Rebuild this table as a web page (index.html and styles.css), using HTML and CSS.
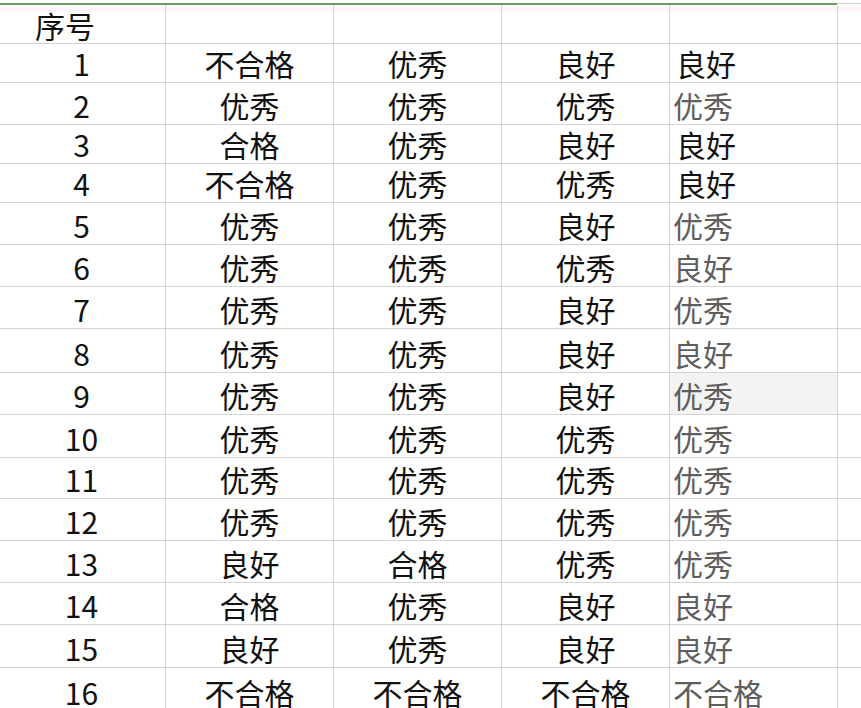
FILE: index.html
```html
<!DOCTYPE html>
<html lang="zh">
<head>
<meta charset="utf-8">
<title>sheet</title>
<link rel="stylesheet" href="styles.css">
</head>
<body>
<div class="sheet">
  <div class="topbar"><div class="topline"></div><div class="topend"></div></div>
  <div class="row h39 head"><div class="c c0 hd">序号</div><div class="c"></div><div class="c"></div><div class="c"></div><div class="c c4"></div><div class="c c5"></div></div>
  <div class="row h39"><div class="c c0">1</div><div class="c">不合格</div><div class="c">优秀</div><div class="c">良好</div><div class="c c4 dk">良好</div><div class="c c5"></div></div>
  <div class="row h42"><div class="c c0">2</div><div class="c">优秀</div><div class="c">优秀</div><div class="c">优秀</div><div class="c c4">优秀</div><div class="c c5"></div></div>
  <div class="row h39"><div class="c c0">3</div><div class="c">合格</div><div class="c">优秀</div><div class="c">良好</div><div class="c c4 dk">良好</div><div class="c c5"></div></div>
  <div class="row h39"><div class="c c0">4</div><div class="c">不合格</div><div class="c">优秀</div><div class="c">优秀</div><div class="c c4 dk">良好</div><div class="c c5"></div></div>
  <div class="row h42"><div class="c c0">5</div><div class="c">优秀</div><div class="c">优秀</div><div class="c">良好</div><div class="c c4">优秀</div><div class="c c5"></div></div>
  <div class="row h42"><div class="c c0">6</div><div class="c">优秀</div><div class="c">优秀</div><div class="c">优秀</div><div class="c c4">良好</div><div class="c c5"></div></div>
  <div class="row h42"><div class="c c0">7</div><div class="c">优秀</div><div class="c">优秀</div><div class="c">良好</div><div class="c c4">优秀</div><div class="c c5"></div></div>
  <div class="row h44"><div class="c c0">8</div><div class="c">优秀</div><div class="c">优秀</div><div class="c">良好</div><div class="c c4">良好</div><div class="c c5"></div></div>
  <div class="row h42"><div class="c c0">9</div><div class="c">优秀</div><div class="c">优秀</div><div class="c">良好</div><div class="c c4 sel">优秀</div><div class="c c5"></div></div>
  <div class="row h43"><div class="c c0">10</div><div class="c">优秀</div><div class="c">优秀</div><div class="c">优秀</div><div class="c c4">优秀</div><div class="c c5"></div></div>
  <div class="row h41"><div class="c c0">11</div><div class="c">优秀</div><div class="c">优秀</div><div class="c">优秀</div><div class="c c4">优秀</div><div class="c c5"></div></div>
  <div class="row h42"><div class="c c0">12</div><div class="c">优秀</div><div class="c">优秀</div><div class="c">优秀</div><div class="c c4">优秀</div><div class="c c5"></div></div>
  <div class="row h42"><div class="c c0">13</div><div class="c">良好</div><div class="c">合格</div><div class="c">优秀</div><div class="c c4">优秀</div><div class="c c5"></div></div>
  <div class="row h42"><div class="c c0">14</div><div class="c">合格</div><div class="c">优秀</div><div class="c">良好</div><div class="c c4">良好</div><div class="c c5"></div></div>
  <div class="row h43"><div class="c c0">15</div><div class="c">良好</div><div class="c">优秀</div><div class="c">良好</div><div class="c c4">良好</div><div class="c c5"></div></div>
  <div class="row h44"><div class="c c0">16</div><div class="c">不合格</div><div class="c">不合格</div><div class="c">不合格</div><div class="c c4">不合格</div><div class="c c5"></div></div>
</div>
</body>
</html>
```
FILE: styles.css
```css
html, body {
  margin: 0;
  padding: 0;
  background: #ffffff;
  overflow: hidden;
}
.sheet {
  width: 861px;
  font-family: "Noto Sans CJK SC", "Noto Sans", sans-serif;
  font-size: 30px;
  color: #111111;
}
.topbar {
  display: flex;
  height: 5px;
  padding-top: 3px;
  box-sizing: border-box;
}
.topline {
  width: 837px;
  height: 2px;
  background: #6b9a5e;
}
.topend {
  flex: 1;
  height: 1px;
  background: #d0d0d0;
}
.row {
  display: grid;
  grid-template-columns: 166px 168px 168px 168px 168px 23px;
  border-bottom: 1px solid #d4d4d4;
  box-sizing: border-box;
}
.head {
  background: linear-gradient(#ffffff 0, #fdf4fb 3px, #fbf6fa 7px, #ffffff 8px);
}
.h39 { height: 39px; }
.h41 { height: 41px; }
.h42 { height: 42px; }
.h43 { height: 43px; }
.h44 { height: 44px; }
.c {
  border-right: 1px solid #d4d4d4;
  display: flex;
  align-items: flex-end;
  justify-content: center;
  line-height: 30px;
  padding-bottom: 4px;
  white-space: nowrap;
}
.c0 { padding-right: 2px; }
.hd {
  justify-content: flex-start;
  padding-left: 35px;
  padding-bottom: 3px;
}
.c4 {
  justify-content: flex-start;
  padding-left: 3px;
  color: #5e5e5e;
}
.c4.dk { color: #111111; padding-left: 6px; }
.sel { background: #f3f3f3; }
.c5 { border-right: none; }
```
